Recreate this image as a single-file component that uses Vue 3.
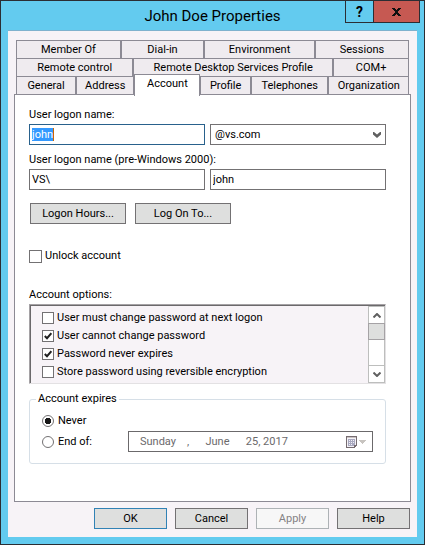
<template>
  <div class="window">
    <header class="titlebar">
      <h1>John Doe Properties</h1>
      <div class="caption">
        <button type="button" class="help" aria-label="Help">?</button>
        <button type="button" class="close" aria-label="Close">
          <svg width="9" height="8" viewBox="0 0 9 8" shape-rendering="crispEdges">
            <path d="M0 0h3v1h1v1h1V1h1V0h3v1H8v1H7v1H6v2h1v1h1v1h1v1H6V7H5V6H4v1H3v1H0V7h1V6h1V5h1V3H2V2H1V1H0z" fill="#101010" />
          </svg>
        </button>
      </div>
    </header>

    <form class="client" @submit.prevent>
      <nav class="tabs">
        <div class="tab_row" v-for="(row, index) in tabs" :key="index">
          <button
            v-for="tab in row"
            :key="tab.name"
            type="button"
            class="tab"
            :class="{ active: tab.name === current }"
            :style="{ flexGrow: tab.size }"
            @click="current = tab.name"
          >{{ tab.name }}</button>
        </div>
      </nav>

      <section class="page">
        <label class="caption_text" for="logon">User logon name:</label>
        <div class="fields">
          <div class="logon">
            <input id="logon" ref="logonInput" v-model="logon" type="text">
            <span class="caret"></span>
          </div>
          <div class="combo">
            <select v-model="domain" aria-label="Domain">
              <option>@vs.com</option>
            </select>
            <svg width="8" height="6" viewBox="0 0 8 6">
              <path d="M0 0h1l3 2.4L7 0h1v2.4L4 6 0 2.4z" fill="#606060" />
            </svg>
          </div>
        </div>

        <label class="caption_text second" for="prefix">User logon name (pre-Windows 2000):</label>
        <div class="fields">
          <input id="prefix" v-model="prefix" type="text">
          <input v-model="oldLogon" type="text" aria-label="Pre-Windows 2000 name">
        </div>

        <div class="actions">
          <button type="button" class="button">Logon Hours...</button>
          <button type="button" class="button">Log On To...</button>
        </div>

        <label class="check unlock"><input v-model="unlock" type="checkbox">Unlock account</label>

        <p class="caption_text">Account options:</p>
        <div class="listbox">
          <div class="options">
            <label v-for="option in options" :key="option.text" class="check">
              <input v-model="option.on" type="checkbox">{{ option.text }}
            </label>
          </div>
          <div class="scrollbar">
            <button type="button" aria-label="Scroll up">
              <svg width="8" height="5" viewBox="0 0 8 5"><path d="M.5 4.5 4 1l3.5 3.5" /></svg>
            </button>
            <div class="thumb"></div>
            <button type="button" class="down" aria-label="Scroll down">
              <svg width="8" height="5" viewBox="0 0 8 5"><path d="M.5.5 4 4 7.5.5" /></svg>
            </button>
          </div>
        </div>

        <fieldset>
          <legend>Account expires</legend>
          <label class="check"><input v-model="expires" type="radio" name="expires" value="never">Never</label>
          <div class="end">
            <label class="check"><input v-model="expires" type="radio" name="expires" value="end">End of:</label>
            <div class="date">
              <input type="text" :value="endDate" aria-label="End date" disabled>
              <button type="button" aria-label="Open calendar" disabled>
                <svg width="20" height="12" viewBox="0 0 20 12" shape-rendering="crispEdges">
                  <path d="M0 0h11v10h-1v1H9v1H0z" fill="#756b70" />
                  <path d="M1 1h9v8H8v2H1z" fill="#f4f2f6" />
                  <path d="M1 1h9v1H1z" fill="#c9c2c2" />
                  <path d="M2 3h7v6H8v1H2z" fill="#a9a9c0" />
                  <path d="M3 4h1v1H3zM5 4h1v1H5zM7 4h1v1H7zM3 6h1v1H3zM5 6h1v1H5zM7 6h1v1H7zM3 8h1v1H3zM5 8h1v1H5z" fill="#f0eff6" />
                  <path d="M13 4h7v1h-1v1h-1v1h-1v1h-1V7h-1V6h-1V5h-1z" fill="#c8c4c0" />
                </svg>
              </button>
            </div>
          </div>
        </fieldset>
      </section>

      <footer>
        <button type="submit" class="button default">OK</button>
        <button type="button" class="button">Cancel</button>
        <button type="button" class="button" disabled>Apply</button>
        <button type="button" class="button">Help</button>
      </footer>
    </form>
  </div>
</template>

<script setup>
import { ref, onMounted } from 'vue'

// size is the share of the row that the tab takes
const tabs = [
  [
    { name: 'Member Of', size: 105 },
    { name: 'Dial-in', size: 83 },
    { name: 'Environment', size: 111 },
    { name: 'Sessions', size: 94 }
  ],
  [
    { name: 'Remote control', size: 117 },
    { name: 'Remote Desktop Services Profile', size: 201 },
    { name: 'COM+', size: 75 }
  ],
  [
    { name: 'General', size: 60 },
    { name: 'Address', size: 58 },
    { name: 'Account', size: 66 },
    { name: 'Profile', size: 50 },
    { name: 'Telephones', size: 78 },
    { name: 'Organization', size: 81 }
  ]
]
const current = ref('Account')

const logon = ref('john')
const domain = ref('@vs.com')
const prefix = ref('VS\\')
const oldLogon = ref('john')
const unlock = ref(false)
const options = ref([
  { text: 'User must change password at next logon', on: false },
  { text: 'User cannot change password', on: true },
  { text: 'Password never expires', on: true },
  { text: 'Store password using reversible encryption', on: false }
])
const expires = ref('never')
const endDate = 'Sunday    ,      June      25, 2017'

// the first field starts focused with its text selected
const logonInput = ref(null)
onMounted(() => {
  logonInput.value.focus()
  logonInput.value.select()
})
</script>

<style>
body {
  margin: 0;
}
</style>

<style scoped>
* {
  box-sizing: border-box;
  margin: 0;
  padding: 0;
}
.window,
button,
input,
select {
  font-family: Roboto, "Liberation Sans", sans-serif;
  font-size: 11px;
  line-height: 14px;
  color: #000;
}
button,
input,
select {
  border-radius: 0;
  outline: none;
}
.window {
  min-height: 100vh;
  display: flex;
  flex-direction: column;
  border: 1px solid #2b2d33;
  background: #63cbef;
  padding: 0 7px 7px;
}

/* TITLE */
.titlebar {
  position: relative;
  height: 29px;
}
h1 {
  text-align: center;
  font-size: 15px;
  font-weight: 400;
  line-height: 30px;
}
.caption {
  position: absolute;
  top: -1px;
  right: -3px;
  display: flex;
}
.caption button {
  height: 23px;
  border: 1px solid #2b2d33;
  display: flex;
  align-items: center;
  justify-content: center;
}
.caption .help {
  width: 29px;
  background: #63cbef;
  font-size: 14px;
  font-weight: 700;
}
.close {
  width: 47px;
  margin-left: -1px;
  background: #c65952;
}

.client {
  flex: 1;
  background: #f7f3f7;
  border-top: 1px solid #7fb2ce;
  padding: 9px 6px 8px;
}

/* TABS */
.tabs {
  padding: 0 2px;
}
.tab_row {
  display: flex;
  height: 18px;
}
.tab {
  flex: 1 1 0;
  min-width: 0;
  background: #efebef;
  border: 1px solid #8c8a94;
  border-bottom: 0;
  white-space: nowrap;
}
.tab.active {
  position: relative;
  height: 22px;
  margin-top: -2px;
  padding-bottom: 3px;
  background: #fff;
}

.page {
  background: #fff;
  border: 1px solid #8c8a94;
  padding: 13px 24px 37px 14px;
}
.caption_text {
  display: block;
  line-height: 14px;
  margin-bottom: 2px;
}
.caption_text.second {
  margin-top: 8px;
}
.fields {
  display: grid;
  grid-template-columns: 1fr 1fr;
  gap: 5px;
}
input[type='text'],
select {
  display: block;
  width: 100%;
  height: 21px;
  border: 1px solid #737173;
  background: #fff;
  padding: 0 2px;
}
.logon,
.combo {
  position: relative;
}
.logon input:focus {
  border-color: #29618c;
}
.logon input::selection {
  background: #3399ff;
  color: #fff;
}
.caret {
  position: absolute;
  left: 24px;
  top: 4px;
  width: 1px;
  height: 13px;
  background: #cc6600;
}
select {
  appearance: none;
  padding: 0 4px;
}
.combo svg {
  position: absolute;
  right: 5px;
  top: 8px;
  pointer-events: none;
}
.actions {
  display: flex;
  gap: 9px;
  padding: 13px 1px 0;
}
.button {
  height: 21px;
  border: 1px solid #737173;
  background: #dedfde;
}
.actions .button {
  width: 96px;
}

/* CHECKS */
.check {
  display: flex;
  align-items: center;
  gap: 3px;
  height: 18px;
}
.check input {
  appearance: none;
  flex: none;
  width: 12px;
  height: 12px;
  border: 1px solid #737173;
  background: #fff center no-repeat;
}
.check input[type='checkbox']:checked {
  background-image: url("data:image/svg+xml,%3Csvg xmlns='http://www.w3.org/2000/svg' width='8' height='8'%3E%3Cpath d='M.8 4 3 6.2 7.4 1.2' fill='none' stroke='%23202020' stroke-width='2'/%3E%3C/svg%3E");
}
.check input[type='radio'] {
  border-radius: 50%;
}
.check input[type='radio']:checked {
  background-image: radial-gradient(circle, #181818 0 3px, transparent 3px);
}
.unlock {
  margin: 23px 0;
}
.unlock input {
  width: 13px;
  height: 13px;
}
.listbox {
  display: flex;
  height: 80px;
  border: 1px solid #e3e1e3;
  border-top-color: #a5a2a5;
  border-left-color: #a5a2a5;
  padding: 1px 0 0 1px;
  box-shadow: inset 1px 1px #6b696b;
  background: #f7f3f7;
}
.options {
  flex: 1;
  padding: 3px 11px 2px;
}
.scrollbar {
  width: 17px;
  display: flex;
  flex-direction: column;
  background: #fff;
  border: 1px solid #bdbebd;
  border-top: 0;
}
.scrollbar button {
  height: 17px;
  border: 0;
  border-top: 1px solid #bdbebd;
  background: #fff;
  display: flex;
  align-items: center;
  justify-content: center;
}
.scrollbar .down {
  margin-top: auto;
}
.scrollbar path {
  fill: none;
  stroke: #606060;
  stroke-width: 2;
}
.thumb {
  height: 17px;
  border: 1px solid #a5a2a5;
  margin: 0 -1px;
  background: #dedfde;
}

/* EXPIRES */
fieldset {
  margin-top: 8px;
  border: 1px solid #d6dfe7;
  border-radius: 3px;
  padding: 6px 12px 11px;
}
legend {
  margin-left: -6px;
  padding: 0 2px;
}
fieldset .check {
  gap: 4px;
}
.end {
  display: flex;
  align-items: center;
  margin-top: 1px;
}
.end .check {
  width: 86px;
}
.date {
  flex: 1;
  display: flex;
  align-items: center;
  height: 21px;
  border: 1px solid #6b696b;
  padding-right: 6px;
}
.date input[type='text'] {
  flex: 1;
  min-width: 0;
  height: 19px;
  border: 0;
  padding-left: 11px;
  color: #6b696b;
}
.date button {
  display: flex;
  border: 0;
  background: none;
}

footer {
  display: flex;
  justify-content: flex-end;
  gap: 8px;
  padding: 6px 1px 0;
}
footer .button {
  width: 73px;
}
.button.default {
  border-color: #3182b5;
}
.button:disabled {
  border-color: #adb2b5;
  background: #f7f7f7;
  color: #848284;
}
</style>
